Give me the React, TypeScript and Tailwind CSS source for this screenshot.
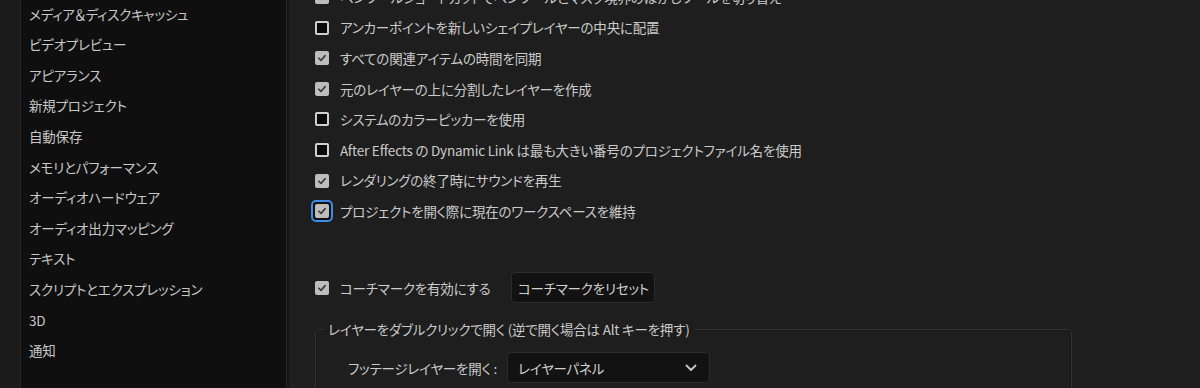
import React from "react";

const font = "[font-family:'Noto_Sans_CJK_JP','Noto_Sans',sans-serif] [font-feature-settings:'palt']";
const txt = "text-[13.5px] tracking-[-0.2px]";

function Box({ checked, focus }: { checked: boolean; focus?: boolean }) {
  const inner = checked ? (
    <div className="w-[14px] h-[14px] rounded-[2px] bg-[#bdbdbd] flex items-center justify-center shrink-0">
      <svg width="10" height="10" viewBox="0 0 10 10">
        <polyline points="1.8,5.2 4,7.4 8.2,2.6" fill="none" stroke="#3a3a3a" strokeWidth="1.6" strokeLinecap="round" strokeLinejoin="round" />
      </svg>
    </div>
  ) : (
    <div className="w-[14px] h-[14px] rounded-[2px] bg-[#0a0a0a] border-2 border-[#cfcfcf] shrink-0" />
  );
  if (focus) {
    return (
      <div className="w-[14px] h-[14px] flex items-center justify-center shrink-0">
        <div className="rounded-[5px] border-2 border-[#3d8ee8] p-[2px] bg-[#101010] shrink-0">
          {inner}
        </div>
      </div>
    );
  }
  return inner;
}

function Row({ checked, focus, label }: { checked: boolean; focus?: boolean; label: string }) {
  return (
    <div className="h-[30.6px] flex items-center gap-[11px]">
      <Box checked={checked} focus={focus} />
      <span className={`${txt} text-[#cbcbcb] whitespace-nowrap`}>{label}</span>
    </div>
  );
}

const sidebar = [
  "メディア＆ディスクキャッシュ",
  "ビデオプレビュー",
  "アピアランス",
  "新規プロジェクト",
  "自動保存",
  "メモリとパフォーマンス",
  "オーディオハードウェア",
  "オーディオ出力マッピング",
  "テキスト",
  "スクリプトとエクスプレッション",
  "3D",
  "通知",
];

export default function App() {
  return (
    <div className={`w-[1200px] h-[388px] overflow-hidden flex bg-[#1e1e1e] ${font}`}>
      <div className="w-[21px] h-full bg-[#1b1b1b] border-r border-[#2a2a2a] shrink-0" />
      <div className="w-[266px] h-full bg-[#0f0f0f] shrink-0 pl-[8px] border-r border-[#272727]">
        <div className="mt-[-1.5px] flex flex-col">
          {sidebar.map((s) => (
            <div key={s} className={`h-[30.6px] flex items-center ${txt} text-[#c8c8c8] whitespace-nowrap`}>
              {s}
            </div>
          ))}
        </div>
      </div>
      <div className="w-[2px] h-full bg-[#161616] shrink-0" />
      <div className="flex-1 h-full pl-[26px] flex flex-col">
        <div className="mt-[-18.3px] flex flex-col">
          <Row checked label="ペンツールショートカットでペンツールとマスク境界のぼかしツールを切り替え" />
          <Row checked={false} label="アンカーポイントを新しいシェイプレイヤーの中央に配置" />
          <Row checked label="すべての関連アイテムの時間を同期" />
          <Row checked label="元のレイヤーの上に分割したレイヤーを作成" />
          <Row checked={false} label="システムのカラーピッカーを使用" />
          <Row checked={false} label="After Effects の Dynamic Link は最も大きい番号のプロジェクトファイル名を使用" />
          <Row checked label="レンダリングの終了時にサウンドを再生" />
          <Row checked focus label="プロジェクトを開く際に現在のワークスペースを維持" />
        </div>
        <div className="mt-[46px] h-[32px] flex items-center">
          <Box checked />
          <span className={`ml-[11px] ${txt} text-[#cbcbcb] whitespace-nowrap`}>コーチマークを有効にする</span>
          <button className={`ml-[21px] w-[144px] h-[31px] rounded-[4px] bg-[#121212] border border-[#2c2c2c] ${txt} text-[#d0d0d0] flex items-center justify-center`}>
            コーチマークをリセット
          </button>
        </div>
        <fieldset className="mt-[16px] w-[757px] border border-[#333333] rounded-[5px] shadow-[inset_0_0_0_1px_#171717] pb-[20px]">
          <legend className={`ml-[8px] px-[4px] ${txt} text-[#cbcbcb] whitespace-nowrap leading-[20px]`}>
            レイヤーをダブルクリックで開く (逆で開く場合は Alt キーを押す)
          </legend>
          <div className="mt-[13px] flex items-center">
            <span className={`w-[181px] text-right ${txt} text-[#cbcbcb] whitespace-nowrap`}>フッテージレイヤーを開く :</span>
            <div className="ml-[10px] w-[203px] h-[31px] rounded-[4px] bg-[#121212] border border-[#2c2c2c] flex items-center justify-between pl-[10px] pr-[12px]">
              <span className={`${txt} text-[#d0d0d0] whitespace-nowrap`}>レイヤーパネル</span>
              <svg width="12" height="8" viewBox="0 0 12 8">
                <polyline points="1.5,1.5 6,6 10.5,1.5" fill="none" stroke="#c8c8c8" strokeWidth="1.8" strokeLinecap="round" strokeLinejoin="round" />
              </svg>
            </div>
          </div>
        </fieldset>
      </div>
    </div>
  );
}
